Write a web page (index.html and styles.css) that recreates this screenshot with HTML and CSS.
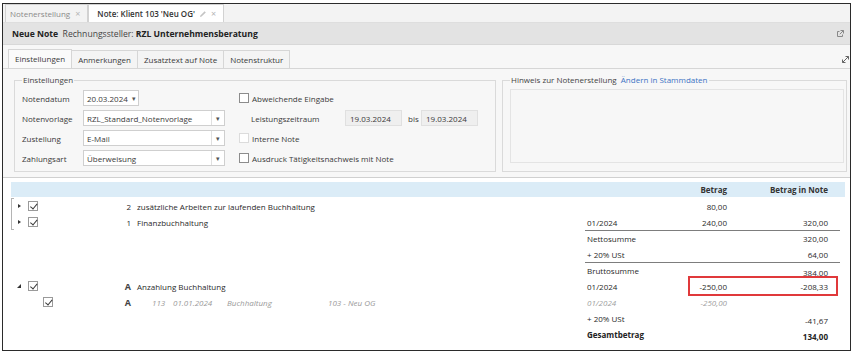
FILE: index.html
```html
<!DOCTYPE html>
<html lang="de">
<head>
  <meta charset="UTF-8">
  <title>Neue Note</title>
  <link rel="stylesheet" href="styles.css">
</head>
<body>
  <div class="window">
    <div class="doc-tabs">
      <div class="doc-tab">Notenerstellung <span class="close">×</span></div>
      <div class="doc-tab active">Note: Klient 103 'Neu OG'
        <svg class="pencil" width="8" height="8" viewBox="0 0 8 8"><path d="M1 7 L1.4 5.4 L5.6 1.2 L6.8 2.4 L2.6 6.6 Z" fill="#c4c4c4"/></svg>
        <span class="close">×</span>
      </div>
    </div>

    <div class="title-bar">
      <div><b>Neue Note</b>&nbsp; Rechnungssteller: <b>RZL Unternehmensberatung</b></div>
      <svg width="8" height="8" viewBox="0 0 8 8"><path d="M3.5 1.5 H1.5 V6.5 H6.5 V4.5" fill="none" stroke="#888"/><path d="M4.5 0.5 H7.5 V3.5 M7.5 0.5 L3.8 4.2" fill="none" stroke="#888"/></svg>
    </div>

    <div class="sub-tabs">
      <div class="sub-tab active">Einstellungen</div>
      <div class="sub-tab">Anmerkungen</div>
      <div class="sub-tab">Zusatztext auf Note</div>
      <div class="sub-tab">Notenstruktur</div>
      <svg class="pin" width="7" height="7" viewBox="0 0 7 7"><path d="M0.5 6.5 L6.5 0.5 M0.5 3.5 V6.5 H3.5 M3.5 0.5 H6.5 V3.5" fill="none" stroke="#666"/></svg>
    </div>

    <div class="settings">
      <fieldset class="group settings-group">
        <legend>Einstellungen</legend>
        <div class="form-grid">
          <label>Notendatum</label>
          <div class="date-box">20.03.2024 <span class="caret">▾</span></div>
          <div class="opt"><span class="box"></span>Abweichende Eingabe</div>

          <label>Notenvorlage</label>
          <div class="select"><span>RZL_Standard_Notenvorlage</span><span class="drop">▾</span></div>
          <div class="opt period">
            <span class="period-label">Leistungszeitraum</span>
            <span class="ro">19.03.2024</span>
            <span class="bis">bis</span>
            <span class="ro">19.03.2024</span>
          </div>

          <label>Zustellung</label>
          <div class="select"><span>E-Mail</span><span class="drop">▾</span></div>
          <div class="opt"><span class="box disabled"></span>Interne Note</div>

          <label>Zahlungsart</label>
          <div class="select"><span>Überweisung</span><span class="drop">▾</span></div>
          <div class="opt"><span class="box"></span>Ausdruck Tätigkeitsnachweis mit Note</div>
        </div>
      </fieldset>

      <fieldset class="group hint-group">
        <legend>Hinweis zur Notenerstellung &nbsp;<a href="#">Ändern in Stammdaten</a></legend>
        <div class="hint-box"></div>
      </fieldset>
    </div>

    <div class="grid">
      <div class="grid-head">
        <div class="tree-col"></div>
        <div class="sum-col">
          <span class="lbl"></span>
          <span class="amt">Betrag</span>
          <span class="note">Betrag in Note</span>
        </div>
      </div>

      <div class="grid-body">
        <div class="tree">
          <div class="tree-group">
            <div class="tree-row">
              <span class="arrow closed"></span><span class="chk on"></span>
              <span class="num">2</span><span class="text">zusätzliche Arbeiten zur laufenden Buchhaltung</span>
            </div>
            <div class="tree-row">
              <span class="arrow closed"></span><span class="chk on"></span>
              <span class="num">1</span><span class="text">Finanzbuchhaltung</span>
            </div>
          </div>
          <div class="tree-row"></div>
          <div class="tree-row"></div>
          <div class="tree-row"></div>
          <div class="tree-row">
            <span class="arrow open"></span><span class="chk on"></span>
            <span class="num letter">A</span><span class="text">Anzahlung Buchhaltung</span>
          </div>
          <div class="tree-row child">
            <span class="arrow"></span><span class="chk on"></span>
            <span class="num letter">A</span>
            <span class="meta">
              <span class="m-nr">113</span><span class="m-date">01.01.2024</span><span class="m-text">Buchhaltung</span><span>103 - Neu OG</span>
            </span>
          </div>
        </div>

        <div class="sums">
          <div class="sum-row"><span class="lbl"></span><span class="amt">80,00</span><span class="note"></span></div>
          <div class="sum-row"><span class="lbl">01/2024</span><span class="amt">240,00</span><span class="note">320,00</span></div>
          <div class="sum-row sep"><span class="lbl">Nettosumme</span><span class="amt"></span><span class="note">320,00</span></div>
          <div class="sum-row"><span class="lbl">+ 20% USt</span><span class="amt"></span><span class="note">64,00</span></div>
          <div class="sum-row sep"><span class="lbl">Bruttosumme</span><span class="amt"></span><span class="note low">384,00</span></div>
          <div class="sum-row">
            <span class="lbl">01/2024</span>
            <span class="mark"><span class="amt">-250,00</span><span class="note">-208,33</span></span>
          </div>
          <div class="sum-row muted"><span class="lbl">01/2024</span><span class="amt">-250,00</span><span class="note"></span></div>
          <div class="sum-row"><span class="lbl">+ 20% USt</span><span class="amt"></span><span class="note low">-41,67</span></div>
          <div class="sum-row total"><span class="lbl">Gesamtbetrag</span><span class="amt"></span><span class="note low">134,00</span></div>
        </div>
      </div>
    </div>
  </div>
</body>
</html>
```

FILE: styles.css
```css
body {
  margin: 0;
  background: #fff;
  font-family: "Open Sans", "Noto Sans", sans-serif;
  font-size: 8px;
  color: #2a2a2a;
}
.window {
  margin: 3px 0 0 2px;
  width: 847px;
  height: 346px;
  border: 1px solid #2b2b2b;
  background: #f7f7f7;
  display: flex;
  flex-direction: column;
  overflow: hidden;
}

/* document tabs */
.doc-tabs {
  display: flex;
  height: 18px;
  padding-left: 2px;
  background: #f3f3f3;
  border-bottom: 1px solid #dedede;
}
.doc-tab {
  display: flex;
  align-items: center;
  gap: 5px;
  padding: 0 7px 0 4px;
  border: 1px solid #d2d2d2;
  border-bottom: none;
  color: #8a8a8a;
}
.doc-tab.active {
  background: #fff;
  color: #333;
  font-weight: 600;
  padding-left: 8px;
  gap: 4px;
}
.close {
  color: #b5b5b5;
  font-weight: 400;
  font-size: 9px;
}

.title-bar {
  height: 21px;
  display: flex;
  align-items: center;
  justify-content: space-between;
  padding: 0 6px 0 9px;
  background: #e3e3e3;
  border-bottom: 1px solid #d8d8d8;
  font-size: 8.6px;
  color: #444;
}
.title-bar b {
  color: #222;
}

/* sub tabs */
.sub-tabs {
  display: flex;
  align-items: flex-end;
  margin-top: 5px;
  padding-left: 5px;
  height: 18px;
  border-bottom: 1px solid #d6d6d6;
}
.sub-tab {
  height: 17px;
  line-height: 17px;
  padding: 0 6px;
  border: 1px solid #d6d6d6;
  border-bottom: none;
  margin-right: -1px;
  color: #3a3a3a;
  background: #f4f4f4;
}
.sub-tab.active {
  background: #fafafa;
  height: 18px;
}
.pin {
  margin-left: auto;
  margin-right: 1px;
  align-self: center;
}

/* settings */
.settings {
  display: flex;
  gap: 6px;
  padding: 5px 3px 5px 11px;
  border-bottom: 1px solid #d0d0d0;
}
.group {
  margin: 0;
  border: 1px solid #dadada;
  min-width: 0;
}
.group legend {
  padding: 0 1px;
  color: #444;
  line-height: 12px;
}
.settings-group {
  width: 465px;
  padding: 0 8px 5px 7px;
}
.hint-group {
  flex: 1;
  padding: 0 2px 6px 7px;
}
.hint-group a {
  color: #3c73c4;
  text-decoration: none;
}
.hint-box {
  margin-top: 3px;
  height: 72px;
  border: 1px solid #e4e4e4;
}

.form-grid {
  display: grid;
  grid-template-columns: 47px 142px 1fr;
  grid-auto-rows: 16px;
  row-gap: 4px;
  column-gap: 14px;
  margin-top: 4px;
  align-items: center;
  color: #3a3a3a;
}
.date-box,
.select,
.ro {
  height: 16px;
  box-sizing: border-box;
  border: 1px solid #cfcfcf;
  background: #fff;
  display: flex;
  align-items: center;
  padding-left: 3px;
}
.date-box {
  width: 56px;
}
.caret,
.drop {
  font-size: 7px;
  color: #555;
}
.caret {
  margin-left: 4px;
}
.select {
  justify-content: space-between;
}
.drop {
  width: 12px;
  height: 100%;
  border-left: 1px solid #e0e0e0;
  display: flex;
  align-items: center;
  justify-content: center;
}
.opt {
  display: flex;
  align-items: center;
  gap: 3px;
}
.box {
  width: 8px;
  height: 8px;
  border: 1px solid #8c8c8c;
  background: #fff;
}
.box.disabled {
  border-color: #dcdcdc;
}
.period {
  padding-left: 12px;
  gap: 0;
}
.period-label {
  width: 94px;
}
.ro {
  width: 57px;
  background: #efefef;
  border-color: #e0e0e0;
  padding-left: 4px;
}
.bis {
  width: 19px;
  padding-left: 6px;
  box-sizing: border-box;
}

/* grid */
.grid {
  flex: 1;
  background: #fff;
  padding: 4px 5px 0 8px;
}
.grid-head {
  display: flex;
  height: 15px;
  align-items: center;
  background: #dbecf7;
  font-weight: 700;
  color: #333;
}
.tree-col,
.tree {
  width: 574px;
}
.grid-body {
  display: flex;
  margin-top: 1px;
}
.tree {
  padding-left: 3px;
  box-sizing: border-box;
}
.tree-group {
  margin-left: -3px;
  padding-left: 3px;
  background:
    linear-gradient(#b4b4b4, #b4b4b4) left top / 1px 100% no-repeat,
    linear-gradient(#b4b4b4, #b4b4b4) left top / 3px 1px no-repeat,
    linear-gradient(#b4b4b4, #b4b4b4) left bottom / 3px 1px no-repeat;
}
.tree-row {
  height: 16px;
  display: flex;
  align-items: center;
}
.arrow {
  width: 10px;
  height: 16px;
  display: flex;
  align-items: center;
  justify-content: center;
}
.arrow.closed::before {
  content: "";
  border-left: 3px solid #333;
  border-top: 2.5px solid transparent;
  border-bottom: 2.5px solid transparent;
}
.arrow.open::before {
  content: "";
  border-bottom: 4px solid #333;
  border-left: 4px solid transparent;
}
.chk {
  margin-left: 4px;
  width: 8px;
  height: 8px;
  border: 1px solid #9a9a9a;
  background: #fff;
  position: relative;
}
.chk.on::after {
  content: "";
  position: absolute;
  left: 2.5px;
  top: 0;
  width: 2.5px;
  height: 5.5px;
  border: solid #3a3a3a;
  border-width: 0 1px 1px 0;
  transform: rotate(40deg);
}
.child .chk {
  margin-left: 19px;
}
.num {
  width: 93px;
  text-align: right;
}
.child .num {
  width: 78px;
}
.letter {
  font-weight: 700;
  font-size: 9px;
  color: #444;
}
.text {
  margin-left: 6px;
}
.meta {
  margin-left: 6px;
  display: flex;
  font-style: italic;
  color: #9a9a9a;
}
.m-nr {
  width: 36px;
  padding-left: 15px;
  box-sizing: border-box;
}
.m-date {
  width: 54px;
}
.m-text {
  width: 101px;
}

/* sums */
.sum-col,
.sum-row {
  display: flex;
  align-items: center;
}
.sums {
  width: 255px;
}
.sum-row {
  height: 16px;
  box-sizing: border-box;
}
.sum-row.sep {
  border-top: 1px solid #7d7d7d;
}
.lbl {
  width: 105px;
  padding-left: 2px;
  box-sizing: border-box;
}
.amt {
  width: 38px;
  padding-right: 1px;
  box-sizing: border-box;
  text-align: right;
}
.note {
  width: 108px;
  padding-right: 8px;
  box-sizing: border-box;
  text-align: right;
}
.note.low {
  padding-top: 4px;
}
.mark {
  display: flex;
  height: 16px;
  align-items: center;
  outline: 2px solid #e0393b;
  outline-offset: 0;
}
.muted {
  font-style: italic;
  color: #a0a0a0;
}
.total {
  font-weight: 700;
  color: #222;
}
```
